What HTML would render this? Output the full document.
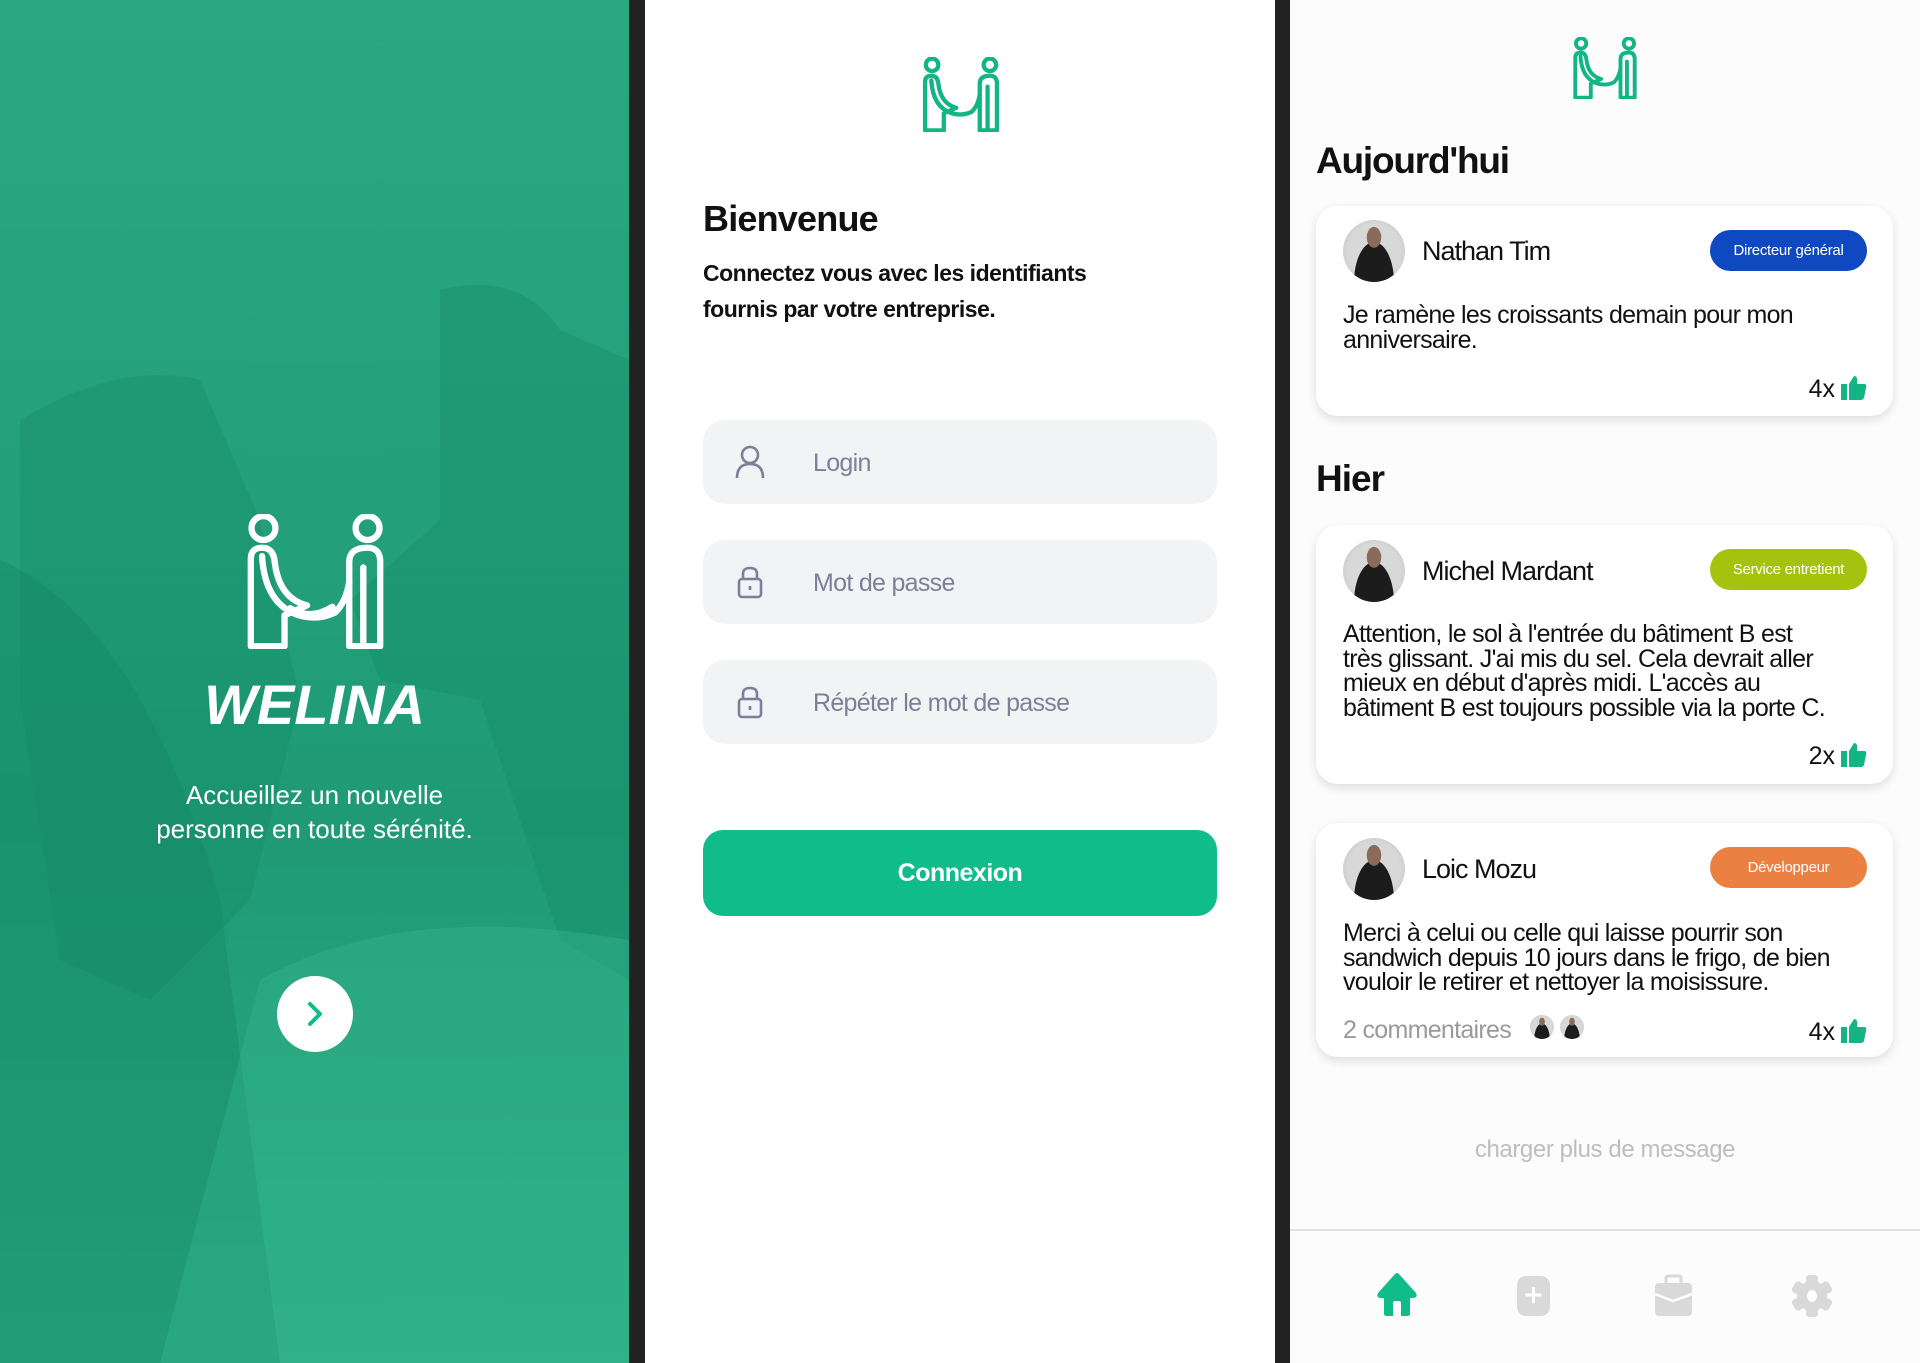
<!DOCTYPE html>
<html><head><meta charset="utf-8"><style>
*{margin:0;padding:0;box-sizing:border-box}
body{width:1920px;height:1363px;overflow:hidden;background:#222;font-family:"Liberation Sans",sans-serif;position:relative}
.p{position:absolute;top:0;height:1363px;overflow:hidden}
.abs{position:absolute}
.n{white-space:nowrap}
.inp{position:absolute;left:58px;width:514px;height:84px;background:#f2f3f5;border-radius:22px}
.inp span{position:absolute;left:110px;top:29px;font-size:25px;color:#7c7f9a;letter-spacing:-0.7px}
.inp svg{position:absolute;left:30px;top:24px}
.card{position:absolute;left:26px;width:577px;background:#fff;border-radius:22px;box-shadow:0 4px 10px rgba(0,0,0,.12)}
.av{position:absolute;left:27px;top:14px;width:62px;height:62px;border-radius:50%;background:radial-gradient(ellipse at 50% 28%,#8a6a58 0 16%,transparent 17%),radial-gradient(ellipse at 50% 100%,#1c1c1c 0 45%,transparent 46%),radial-gradient(circle,#d8d8d8 0 60%,#bbb 100%)}
.nm{position:absolute;left:106px;top:30px;font-size:27px;color:#111;letter-spacing:-1px}
.bd{position:absolute;right:26px;top:24px;width:157px;height:41px;border-radius:21px;color:#fff;font-size:15px;text-align:center;line-height:41px;letter-spacing:-0.3px}
.msg{position:absolute;left:27px;font-size:25px;line-height:24.5px;color:#111;letter-spacing:-0.7px}
.lk{position:absolute;right:26px;font-size:25px;color:#111}
.lk svg{vertical-align:-3px;margin-left:6px}
</style></head><body>

<!-- LEFT -->
<div class="p" style="left:0;width:629px;background:linear-gradient(180deg,#2aa87f 0%,#23a079 40%,#1f9a74 60%,#2bab83 100%)">
<svg class="abs" style="left:0;top:0" width="629" height="1363">
<path d="M20 420 Q120 360 200 380 L260 520 L300 700 L250 900 L150 1000 L60 960 L20 700Z" fill="#148a65" opacity=".35"/>
<path d="M0 560 Q140 620 220 900 L280 1363 L0 1363Z" fill="#138762" opacity=".4"/>
<path d="M440 290 Q520 270 560 330 L629 360 L629 980 L560 940 L480 700 L380 680 L350 600 L440 520Z" fill="#148a65" opacity=".35"/>
<path d="M160 1363 L260 980 Q400 900 629 940 L629 1363Z" fill="#3cbf95" opacity=".3"/>
</svg>
<svg class="abs" style="left:245px;top:514px" width="141" height="135" viewBox="0 0 100 96" fill="none" stroke="#fff" stroke-width="4.5" stroke-linejoin="round" stroke-linecap="round">
<circle cx="13" cy="10" r="8.5"/><circle cx="87" cy="10" r="8.5"/>
<path d="M4 94V32Q4 24 12 24Q20 24 21 34Q24 60 44 65L28 72V94Z"/>
<path d="M12 30Q14 64 38 72Q52 76 64 70Q72 62 74 48"/>
<path d="M32 67Q46 76 62 66"/>
<path d="M74 94V34Q74 24 87 24Q96 24 96 34V94Z"/>
<path d="M84 38V92"/>
</svg>
<div class="abs" style="left:0;width:629px;top:672px;text-align:center;color:#fff;font-size:56px;font-weight:bold;font-style:italic;letter-spacing:0px">WELINA</div>
<div class="abs" style="left:0;width:629px;top:778px;text-align:center;color:#fff;font-size:26px;line-height:34px">Accueillez un nouvelle<br>personne en toute sérénité.</div>
<div class="abs" style="left:277px;top:976px;width:76px;height:76px;border-radius:50%;background:#fff"></div>
<svg class="abs" style="left:300px;top:998px" width="30" height="32"><path d="M10 6L20 16L10 26" stroke="#10bd8a" stroke-width="4" fill="none" stroke-linecap="round" stroke-linejoin="round"/></svg>
</div>

<!-- MIDDLE -->
<div class="p" style="left:645px;width:630px;background:#fff">
<svg class="abs" style="left:276px;top:57px" width="80" height="75" viewBox="0 0 100 96" fill="none" stroke="#14b584" stroke-width="5.5" stroke-linejoin="round" stroke-linecap="round">
<circle cx="13" cy="10" r="8"/><circle cx="87" cy="10" r="8"/>
<path d="M4 94V32Q4 24 12 24Q20 24 21 34Q24 60 44 65L28 72V94Z"/>
<path d="M12 30Q14 64 38 72Q52 76 64 70Q72 62 74 48"/>
<path d="M74 94V34Q74 24 87 24Q96 24 96 34V94Z"/><path d="M84 38V92"/>
</svg>
<div class="abs n" style="left:58px;top:198px;font-size:36px;font-weight:bold;color:#111;letter-spacing:-0.8px">Bienvenue</div>
<div class="abs n" style="left:58px;top:255px;font-size:23px;font-weight:bold;color:#111;line-height:36px;letter-spacing:-0.5px">Connectez vous avec les identifiants<br>fournis par votre entreprise.</div>
<div class="inp" style="top:420px"><svg width="34" height="36" viewBox="0 0 34 36" fill="none" stroke="#7c7f9a" stroke-width="2.6"><circle cx="17" cy="11" r="8"/><path d="M4 34Q4 20 17 20Q30 20 30 34"/></svg><span class="n">Login</span></div>
<div class="inp" style="top:540px"><svg width="34" height="36" viewBox="0 0 34 36" fill="none" stroke="#7c7f9a" stroke-width="2.6"><rect x="6" y="15" width="22" height="18" rx="3"/><path d="M10 15V10Q10 4 17 4Q24 4 24 10V15"/><path d="M17 22V26"/></svg><span class="n">Mot de passe</span></div>
<div class="inp" style="top:660px"><svg width="34" height="36" viewBox="0 0 34 36" fill="none" stroke="#7c7f9a" stroke-width="2.6"><rect x="6" y="15" width="22" height="18" rx="3"/><path d="M10 15V10Q10 4 17 4Q24 4 24 10V15"/><path d="M17 22V26"/></svg><span class="n">Répéter le mot de passe</span></div>
<div class="abs n" style="left:58px;top:830px;width:514px;height:86px;border-radius:20px;background:#10bd8a;color:#fff;font-size:25px;font-weight:bold;text-align:center;line-height:86px;letter-spacing:-0.5px">Connexion</div>
</div>

<!-- RIGHT -->
<div class="p" style="left:1290px;width:630px;background:#fcfcfc">
<svg class="abs" style="left:282px;top:37px" width="66" height="62" viewBox="0 0 100 96" fill="none" stroke="#14b584" stroke-width="6" stroke-linejoin="round" stroke-linecap="round">
<circle cx="13" cy="10" r="8"/><circle cx="87" cy="10" r="8"/>
<path d="M4 94V32Q4 24 12 24Q20 24 21 34Q24 60 44 65L28 72V94Z"/>
<path d="M12 30Q14 64 38 72Q52 76 64 70Q72 62 74 48"/>
<path d="M74 94V34Q74 24 87 24Q96 24 96 34V94Z"/><path d="M84 38V92"/>
</svg>
<div class="abs n" style="left:26px;top:140px;font-size:37px;font-weight:bold;color:#111;letter-spacing:-1.2px">Aujourd'hui</div>

<div class="card" style="top:206px;height:210px">
<div class="av" style="top:14px"></div><div class="nm n">Nathan Tim</div>
<div class="bd" style="background:#0f49c2">Directeur général</div>
<div class="msg n" style="top:97px">Je ramène les croissants demain pour mon<br>anniversaire.</div>
<div class="lk n" style="top:168px">4x<svg width="26" height="26" viewBox="0 0 26 26"><rect x="0" y="10" width="6" height="16" fill="#14b584"/><path d="M8 10L13 2Q17 2 16 8L16 10H24Q26 11 25 14L23 24Q22 26 20 26H8Z" fill="#14b584"/></svg></div>
</div>

<div class="abs n" style="left:26px;top:458px;font-size:37px;font-weight:bold;color:#111;letter-spacing:-1px">Hier</div>

<div class="card" style="top:525px;height:259px">
<div class="av" style="top:15px"></div><div class="nm n" style="top:31px">Michel Mardant</div>
<div class="bd" style="background:#a5c20f;top:24px">Service entretient</div>
<div class="msg n" style="top:97px">Attention, le sol à l'entrée du bâtiment B est<br>très glissant. J'ai mis du sel. Cela devrait aller<br>mieux en début d'après midi. L'accès au<br>bâtiment B est toujours possible via la porte C.</div>
<div class="lk n" style="top:216px">2x<svg width="26" height="26" viewBox="0 0 26 26"><rect x="0" y="10" width="6" height="16" fill="#14b584"/><path d="M8 10L13 2Q17 2 16 8L16 10H24Q26 11 25 14L23 24Q22 26 20 26H8Z" fill="#14b584"/></svg></div>
</div>

<div class="card" style="top:823px;height:234px">
<div class="av" style="top:15px"></div><div class="nm n" style="top:31px">Loic Mozu</div>
<div class="bd" style="background:#ea8142;top:24px">Développeur</div>
<div class="msg n" style="top:98px">Merci à celui ou celle qui laisse pourrir son<br>sandwich depuis 10 jours dans le frigo, de bien<br>vouloir le retirer et nettoyer la moisissure.</div>
<div class="abs n" style="left:27px;top:193px;font-size:25px;color:#9a9a9a;letter-spacing:-0.7px">2 commentaires</div>
<div class="abs av" style="left:214px;top:192px;width:24px;height:24px"></div>
<div class="abs av" style="left:244px;top:192px;width:24px;height:24px"></div>
<div class="lk n" style="top:194px">4x<svg width="26" height="26" viewBox="0 0 26 26"><rect x="0" y="10" width="6" height="16" fill="#14b584"/><path d="M8 10L13 2Q17 2 16 8L16 10H24Q26 11 25 14L23 24Q22 26 20 26H8Z" fill="#14b584"/></svg></div>
</div>

<div class="abs n" style="left:0;width:630px;top:1136px;text-align:center;font-size:24px;color:#bdbdbd;letter-spacing:-0.4px">charger plus de message</div>

<div class="abs" style="left:0;top:1229px;width:630px;height:2px;background:#e2e2e2"></div>
<svg class="abs" style="left:0;top:1270px" width="630" height="60">
<path d="M88 23L105 4Q107 2 109 4L126 23Q128 27 124 28H120V44Q120 46 117 46H111V33Q111 31 109 31H105Q103 31 103 33V46H97Q94 46 94 44V28H90Q86 27 88 23Z" fill="#10bd8a"/>
<rect x="227" y="6" width="33" height="40" rx="9" fill="#d9d9d9"/><path d="M243.5 17V33M235.5 25H251.5" stroke="#fff" stroke-width="3"/>
<rect x="365" y="13" width="37" height="33" rx="4" fill="#d9d9d9"/><rect x="376" y="6" width="15" height="9" rx="2" fill="none" stroke="#d9d9d9" stroke-width="3"/><path d="M365 24L383 31L402 24" stroke="#fff" stroke-width="2.5" fill="none"/>
<g transform="translate(522 26)" fill="#d9d9d9">
<circle r="15"/>
<rect x="-6" y="-21" width="12" height="10" rx="3"/>
<rect x="-6" y="-21" width="12" height="10" rx="3" transform="rotate(60)"/>
<rect x="-6" y="-21" width="12" height="10" rx="3" transform="rotate(120)"/>
<rect x="-6" y="-21" width="12" height="10" rx="3" transform="rotate(180)"/>
<rect x="-6" y="-21" width="12" height="10" rx="3" transform="rotate(240)"/>
<rect x="-6" y="-21" width="12" height="10" rx="3" transform="rotate(300)"/>
<ellipse rx="5" ry="6" fill="#fff"/></g>
</svg>
</div>
</body></html>
